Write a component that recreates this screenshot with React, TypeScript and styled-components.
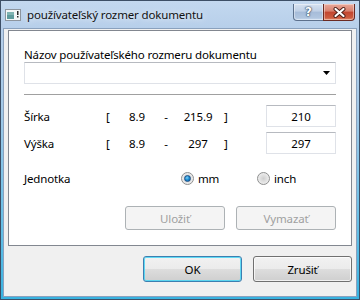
import styled, { createGlobalStyle } from "styled-components";

const GlobalStyle = createGlobalStyle`
  html, body {
    margin: 0;
    padding: 0;
  }
  body {
    font-family: "Noto Sans", "Open Sans", sans-serif;
    font-size: 11.5px;
    letter-spacing: -0.15px;
    color: #000;
    background: #fff;
  }
`;

const Window = styled.div`
  width: 360px;
  height: 300px;
  box-sizing: border-box;
  border: 1px solid #3d4f66;
  padding: 0 2px 2px;
  display: flex;
  flex-direction: column;
  background: linear-gradient(
    to bottom,
    #c3d8ef 0%,
    #b7cfea 9%,
    #a4c9e8 35%,
    #5ebde6 80%,
    #38b2e0 100%
  );
`;

const TitleBar = styled.div`
  height: 27px;
  display: flex;
  align-items: center;
  padding: 0 2px;
`;

const TitleText = styled.span`
  margin-left: 6px;
  font-size: 11.5px;
  color: #111;
  text-shadow: 0 0 6px rgba(255, 255, 255, 0.9);
  white-space: nowrap;
`;

const CaptionButtons = styled.div`
  margin-left: auto;
  align-self: flex-start;
  margin-top: 3px;
  display: flex;
`;

const CaptionButton = styled.div<{ $close?: boolean }>`
  width: ${(p) => (p.$close ? 32 : 31)}px;
  height: 17px;
  box-sizing: border-box;
  display: flex;
  align-items: center;
  justify-content: center;
  border: 1px solid ${(p) => (p.$close ? "#6b2a22" : "#5d718d")};
  border-top: none;
  margin-left: ${(p) => (p.$close ? -1 : 0)}px;
  border-radius: ${(p) => (p.$close ? "0 0 4px 0" : "0 0 0 4px")};
  background: ${(p) =>
    p.$close
      ? "linear-gradient(to bottom, #e9a99b 0%, #d8806d 45%, #c2452f 50%, #cc5b3f 85%, #e38a6b 100%)"
      : "linear-gradient(to bottom, #d7e2f0 0%, #bfd0e6 45%, #a6bcd9 50%, #b0c5df 85%, #c8d9ee 100%)"};
  box-shadow: inset 0 0 0 1px rgba(255, 255, 255, 0.4);
  color: #fff;
  font-family: "DejaVu Sans", sans-serif;
  font-weight: bold;
  font-size: 12px;
  letter-spacing: 0;
  text-shadow: 0 0 1px #34495f, 0 0 1px #34495f, 0 0 2px #34495f;
`;

const Client = styled.div`
  flex: 1;
  background: #f0f0f0;
  border: 1px solid #8aa1bd;
  display: flex;
  flex-direction: column;
`;

const Panel = styled.div`
  margin: 1px 4px 0;
  height: 216px;
  box-sizing: border-box;
  border: 1px solid #828790;
  background: #fff;
  padding: 0 15px 15px;
  display: flex;
  flex-direction: column;
`;

const FieldLabel = styled.div`
  margin-top: 16px;
  line-height: 15px;
  white-space: nowrap;
`;

const Combo = styled.div`
  height: 22px;
  box-sizing: border-box;
  border: 1px solid #dfe2e8;
  border-top-color: #b7bac0;
  background: #fff;
  display: flex;
  align-items: center;
  justify-content: flex-end;
  padding-right: 5px;
`;

const Separator = styled.div`
  margin-top: 10px;
  height: 1px;
  background: #a0a0a0;
`;

const RangeRow = styled.div<{ $top: number }>`
  margin-top: ${(p) => p.$top}px;
  height: 22px;
  display: grid;
  grid-template-columns: 82px 8px 46px 12px 52px 1fr 70px;
  align-items: center;
  white-space: nowrap;
`;

const Cell = styled.span<{ $center?: boolean }>`
  text-align: ${(p) => (p.$center ? "center" : "left")};
`;

const NumberBox = styled.div`
  height: 22px;
  box-sizing: border-box;
  border: 1px solid #dfe2e8;
  border-top-color: #b7bac0;
  display: flex;
  align-items: center;
  justify-content: center;
`;

const UnitRow = styled.div`
  margin-top: 14px;
  height: 20px;
  display: grid;
  grid-template-columns: 157px 76px auto;
  align-items: center;
`;

const RadioOption = styled.label`
  display: flex;
  align-items: center;
  gap: 4px;
`;

const RadioDot = styled.span<{ $checked?: boolean }>`
  width: 13px;
  height: 13px;
  box-sizing: border-box;
  border-radius: 50%;
  border: 1px solid #8e8f8f;
  display: flex;
  align-items: center;
  justify-content: center;
  background: radial-gradient(circle at 50% 50%, #cfcfcf 0%, #e6e6e6 55%, #f6f6f6 100%);
  &::after {
    content: "";
    display: ${(p) => (p.$checked ? "block" : "none")};
    width: 7px;
    height: 7px;
    box-sizing: border-box;
    border-radius: 50%;
    border: 1px solid #1d4f86;
    background: radial-gradient(circle at 40% 35%, #7fd0f5 0%, #1a8ad0 50%, #0d5ba0 100%);
  }
`;

const ActionRow = styled.div<{ $top: number; $width: number; $height: number }>`
  margin-top: ${(p) => p.$top}px;
  display: flex;
  justify-content: flex-end;
  gap: 11px;
  & > button {
    width: ${(p) => p.$width}px;
    height: ${(p) => p.$height}px;
  }
`;

const Footer = styled.div`
  padding: 0 4px;
`;

const PushButton = styled.button<{ $default?: boolean }>`
  box-sizing: border-box;
  font-family: inherit;
  font-size: 11.5px;
  letter-spacing: -0.15px;
  color: #000;
  border-radius: 3px;
  border: 1px solid ${(p) => (p.$default ? "#3c7fb1" : "#707070")};
  background: linear-gradient(to bottom, #f2f2f2 0%, #ebebeb 50%, #dddddd 51%, #cfcfcf 100%);
  box-shadow: inset 0 0 0 1px
    ${(p) => (p.$default ? "rgba(72, 214, 245, 0.85)" : "rgba(255, 255, 255, 0.7)")};
  padding: 0;
  &:disabled {
    color: #a0a0a0;
    border-color: #adb2b5;
    background: #f4f4f4;
    box-shadow: none;
  }
`;

const WindowIcon = () => (
  <svg width="16" height="12" viewBox="0 0 16 12">
    <rect x="0.5" y="0.5" width="15" height="11" fill="#f4f6f8" stroke="#8d959e" />
    <rect x="2" y="3" width="7" height="7" fill="#5e9a9c" />
    <rect x="2" y="3" width="7" height="3" fill="#7fb3b2" />
    <rect x="12" y="2" width="1.5" height="4" fill="#2a2a2a" />
    <rect x="12" y="7" width="1.5" height="1.5" fill="#2a2a2a" />
  </svg>
);

const CloseGlyph = () => (
  <svg width="13" height="11" viewBox="0 0 13 11">
    <path d="M2.5 2 L10.5 9 M10.5 2 L2.5 9" stroke="#4a1d16" strokeWidth="4" strokeLinecap="round" />
    <path d="M2.5 2 L10.5 9 M10.5 2 L2.5 9" stroke="#ffffff" strokeWidth="2.2" strokeLinecap="round" />
  </svg>
);

const ComboArrow = () => (
  <svg width="7" height="4" viewBox="0 0 7 4">
    <path d="M0 0 H7 L3.5 4 Z" fill="#000" />
  </svg>
);

const ranges = [
  { label: "Šírka", min: "8.9", max: "215.9", value: "210", top: 10 },
  { label: "Výška", min: "8.9", max: "297", value: "297", top: 5 },
];

const App = () => {
  return (
    <>
      <GlobalStyle />
      <Window>
        <TitleBar>
          <WindowIcon />
          <TitleText>používateľský rozmer dokumentu</TitleText>
          <CaptionButtons>
            <CaptionButton>?</CaptionButton>
            <CaptionButton $close>
              <CloseGlyph />
            </CaptionButton>
          </CaptionButtons>
        </TitleBar>
        <Client>
          <Panel>
            <FieldLabel>Názov používateľského rozmeru dokumentu</FieldLabel>
            <Combo>
              <ComboArrow />
            </Combo>
            <Separator />
            {ranges.map((r) => (
              <RangeRow key={r.label} $top={r.top}>
                <Cell>{r.label}</Cell>
                <Cell>[</Cell>
                <Cell $center>{r.min}</Cell>
                <Cell $center>-</Cell>
                <Cell $center>{r.max}</Cell>
                <Cell>]</Cell>
                <NumberBox>{r.value}</NumberBox>
              </RangeRow>
            ))}
            <UnitRow>
              <Cell>Jednotka</Cell>
              <RadioOption>
                <RadioDot $checked />
                mm
              </RadioOption>
              <RadioOption>
                <RadioDot />
                inch
              </RadioOption>
            </UnitRow>
            <ActionRow $top={18} $width={100} $height={24}>
              <PushButton disabled>Uložiť</PushButton>
              <PushButton disabled>Vymazať</PushButton>
            </ActionRow>
          </Panel>
          <Footer>
            <ActionRow $top={10} $width={99} $height={26}>
              <PushButton $default>OK</PushButton>
              <PushButton>Zrušiť</PushButton>
            </ActionRow>
          </Footer>
        </Client>
      </Window>
    </>
  );
};

export default App;
